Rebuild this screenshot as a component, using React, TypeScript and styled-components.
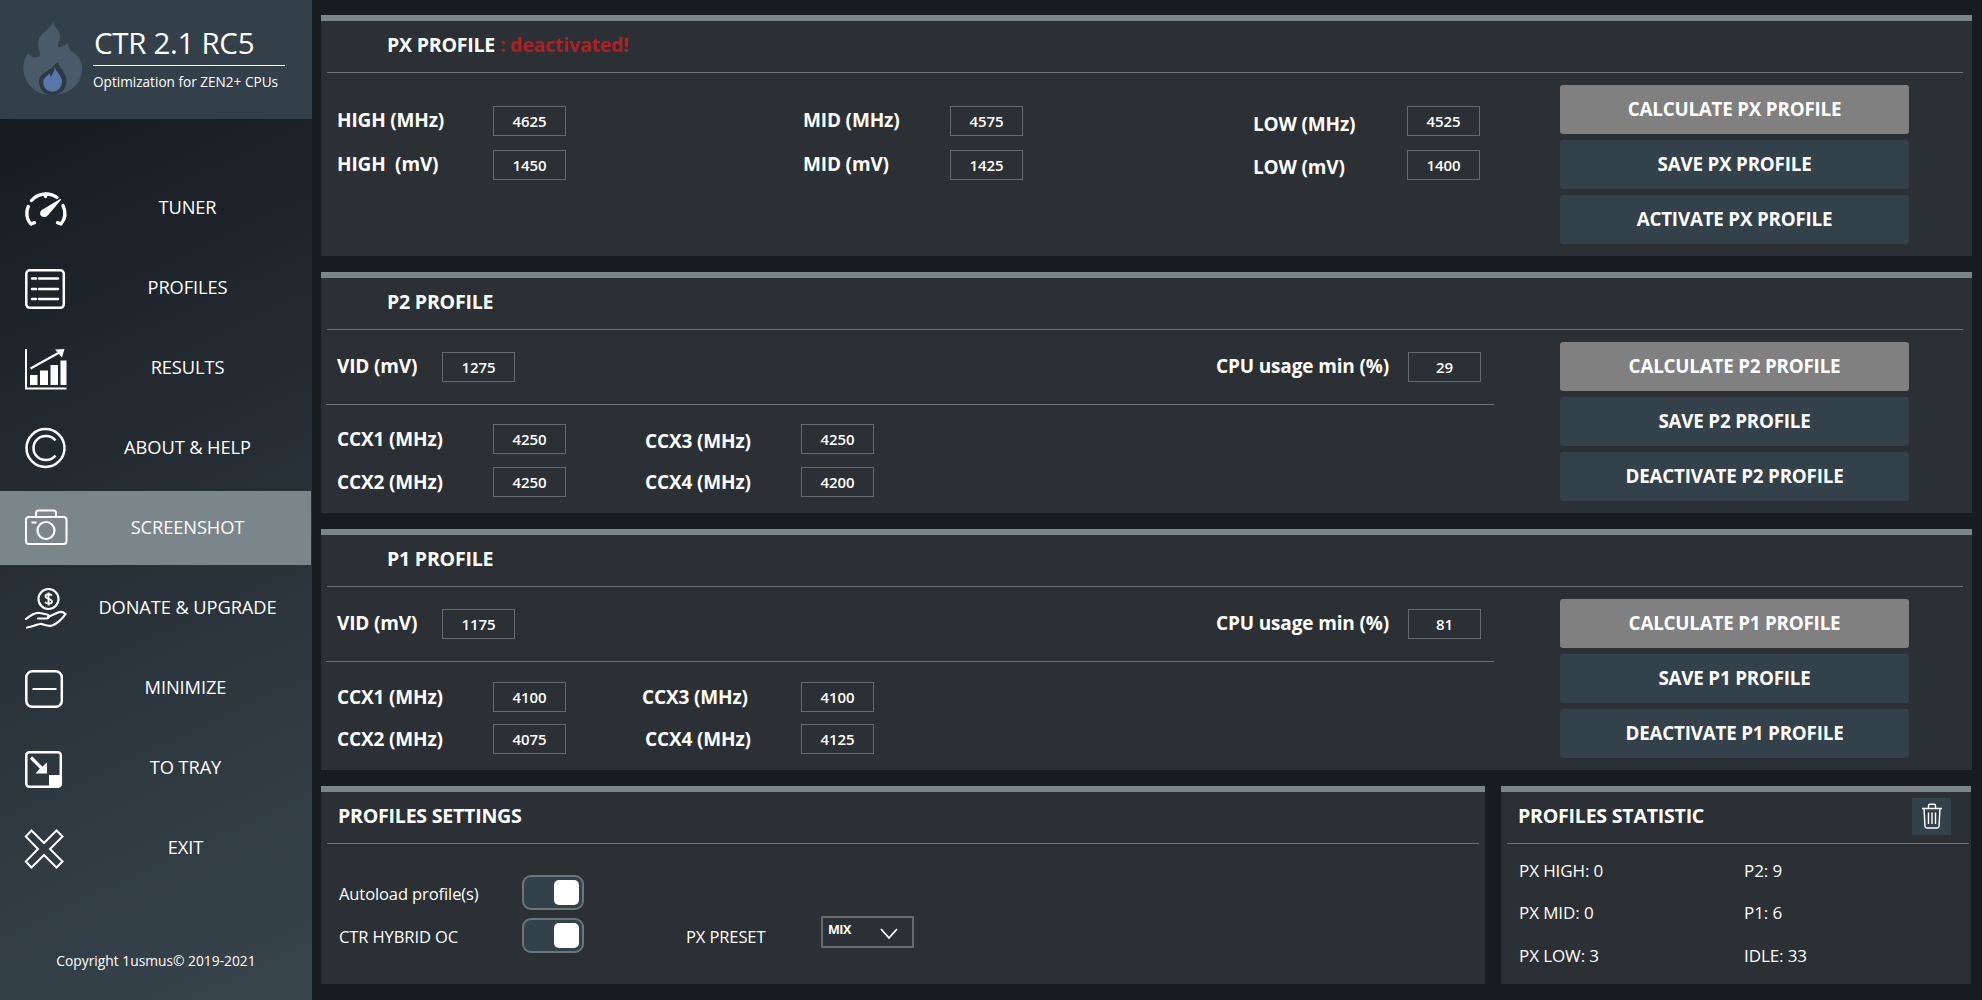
import React from "react";
import styled, { createGlobalStyle } from "styled-components";

const Global = createGlobalStyle`
  html, body { margin: 0; padding: 0; background: #171c20; }
  body { font-family: "Open Sans", "Noto Sans", sans-serif; color: #fff; overflow: hidden; }
  * { box-sizing: border-box; }
`;

const Shell = styled.div`
  display: flex;
  width: 1982px;
  height: 1000px;
  background: #171c20;
`;

const Sidebar = styled.aside`
  width: 312px;
  height: 1000px;
  flex: none;
  display: flex;
  flex-direction: column;
  background: linear-gradient(155deg, #151a1e 8%, #242c32 45%, #38454d 100%);
`;

const Brand = styled.div`
  height: 119px;
  display: flex;
  padding: 21px 0 0 23px;
  background: #33404a;
`;

const BrandText = styled.div`
  margin-left: 11px;
  width: 191px;
`;

const BrandTitle = styled.div`
  font-size: 29.5px;
  line-height: 44px;
  height: 45px;
  border-bottom: 1px solid #fff;
  white-space: nowrap;
  letter-spacing: -0.3px;
  margin-left: -1px;
  padding-left: 1px;
`;

const BrandSub = styled.div`
  font-size: 13.6px;
  line-height: 18px;
  margin-top: 7px;
  margin-left: -1px;
  white-space: nowrap;
`;

const Nav = styled.nav`
  display: flex;
  flex-direction: column;
  gap: 6px;
  padding-top: 52px;
`;

const NavItem = styled.div<{ $active?: boolean }>`
  height: 74px;
  width: 311px;
  display: flex;
  align-items: center;
  padding-left: 25px;
  background: ${(p) => (p.$active ? "#7b868a" : "transparent")};
`;

const NavIcon = styled.svg`
  width: 42px;
  height: 42px;
  flex: none;
  fill: none;
  stroke: #fff;
  stroke-width: 2.5;
  overflow: visible;
`;

const NavLabel = styled.div<{ $shift?: number }>`
  flex: 1;
  text-align: center;
  font-size: 18.3px;
  letter-spacing: -0.1px;
  padding-right: ${(p) => p.$shift ?? 0}px;
  padding-bottom: 4px;
  margin-left: -3px;
  white-space: nowrap;
`;

const Copyright = styled.div`
  margin-top: 66px;
  text-align: center;
  font-size: 13.8px;
  line-height: 20px;
`;

const Main = styled.main`
  flex: 1;
  display: flex;
  flex-direction: column;
  gap: 16px;
  padding: 15px 10px 0 9px;
`;

const Panel = styled.section<{ $height: number; $width?: number }>`
  height: ${(p) => p.$height}px;
  ${(p) => (p.$width ? `width: ${p.$width}px;` : "")}
  flex: none;
  background: #2b3034;
  border-top: 6px solid #7b868a;
`;

const PanelHead = styled.header<{ $left?: number; $right?: number }>`
  height: 52px;
  margin: 0 ${(p) => p.$right ?? 9}px 0 6px;
  padding-left: ${(p) => p.$left ?? 60}px;
  border-bottom: 1px solid #6c7174;
  display: flex;
  align-items: center;
  justify-content: space-between;
`;

const PanelTitle = styled.h2`
  margin: 0 0 5px;
  font-size: 19.6px;
  font-weight: 700;
  letter-spacing: -0.25px;
  white-space: nowrap;
`;

const Warn = styled.span`
  color: #b01f22;
`;

const ProfileBody = styled.div`
  display: flex;
`;

const Fields = styled.div`
  width: 1239px;
  flex: none;
`;

const PxGrid = styled.div`
  display: grid;
  grid-template-columns: 156px 73px 237px 147px 73px 230px 154px 73px;
  grid-auto-rows: 30px;
  row-gap: 14px;
  padding: 33px 0 0 16px;
  align-items: center;
`;

const FieldLabel = styled.div<{ $nudge?: number; $pull?: number }>`
  font-size: 19px;
  font-weight: 700;
  letter-spacing: -0.15px;
  white-space: pre;
  line-height: 26px;
  padding-top: ${(p) => (p.$nudge ?? 0) * 2}px;
  margin: -2px 0 0 ${(p) => -(p.$pull ?? 0)}px;
`;

const ValueBox = styled.div`
  width: 73px;
  height: 30px;
  border: 1px solid #666a6d;
  font-size: 15px;
  font-weight: 600;
  line-height: 28px;
  text-align: center;
  letter-spacing: -0.1px;
`;

const Spacer = styled.div``;

const VidRow = styled.div`
  height: 75px;
  padding: 22px 0 0 11px;
  margin-left: 5px;
  width: 1168px;
  border-bottom: 1px solid #6c7174;
  display: grid;
  grid-template-columns: 105px 73px 701px 192px 73px;
  grid-auto-rows: 30px;
  align-items: center;
`;

const CcxGrid = styled.div<{ $top: number; $gap: number }>`
  display: grid;
  grid-template-columns: 156px 73px 79px 156px 73px;
  grid-auto-rows: 30px;
  row-gap: ${(p) => p.$gap}px;
  padding: ${(p) => p.$top}px 0 0 16px;
  align-items: center;
`;

const Actions = styled.div`
  width: 349px;
  flex: none;
  display: flex;
  flex-direction: column;
  gap: 6px;
  padding-top: 12px;
`;

const ActionButton = styled.button<{ $primary?: boolean }>`
  height: 49px;
  border: 0;
  border-radius: 3px;
  color: #fff;
  background: ${(p) => (p.$primary ? "#808080" : "#33414a")};
  font-family: inherit;
  font-size: 18.8px;
  font-weight: 700;
  letter-spacing: -0.2px;
  padding: 0 0 1px;
`;

const BottomRow = styled.div`
  display: flex;
  gap: 16px;
`;

const SettingsBody = styled.div`
  display: grid;
  grid-template-columns: 183px 62px 102px 135px 93px;
  grid-auto-rows: 35px;
  row-gap: 8px;
  padding: 31px 0 0 18px;
  align-items: center;
`;

const PlainLabel = styled.div`
  font-size: 16.5px;
  letter-spacing: -0.1px;
  white-space: nowrap;
  padding-top: 2px;
`;

const Toggle = styled.div`
  width: 62px;
  height: 35px;
  border: 2px solid #6b767b;
  border-radius: 9px;
  background: #33424a;
  display: flex;
  align-items: center;
  justify-content: flex-end;
  padding-right: 3px;
`;

const Thumb = styled.div`
  width: 25px;
  height: 25px;
  background: #fff;
  border-radius: 5px;
`;

const PresetSelect = styled.div`
  width: 93px;
  height: 32px;
  align-self: start;
  margin-top: -2px;
  border: 2px solid #666a6d;
  display: flex;
  align-items: flex-start;
  justify-content: space-between;
  padding: 3px 13px 0 5px;
  font-size: 12.5px;
  font-weight: 700;
  letter-spacing: -0.5px;
`;

const Chevron = styled.svg`
  width: 20px;
  height: 14px;
  margin-top: 6px;
  fill: none;
  stroke: #fff;
  stroke-width: 1.8;
`;

const TrashButton = styled.button`
  width: 39px;
  height: 37px;
  border: 0;
  padding: 0;
  margin: 0 18px 3px 0;
  background: #33414a;
  display: flex;
  align-items: center;
  justify-content: center;
`;

const TrashIcon = styled.svg`
  width: 22px;
  height: 26px;
  fill: none;
  stroke: #fff;
  stroke-width: 1.4;
`;

const StatGrid = styled.div`
  display: grid;
  grid-template-columns: 225px 1fr;
  grid-auto-rows: 42.5px;
  padding: 5px 0 0 18px;
  align-items: center;
`;

const Stat = styled.div`
  font-size: 17px;
  letter-spacing: -0.1px;
`;

const LogoSvg = styled.svg`
  flex: none;
  width: 60px;
  height: 75px;
`;

const Logo = () => (
  <LogoSvg viewBox="0 0 60 75">
    <path
      d="M30 .7C31 6 36 9 37 14c1 5-3 8-2 12 3 1 7-2 10-3.700 0 4 1 6 5 9 6 4 9 10 9 16 0 16-13 26.700-29 26.700C14 75 .3 63 .3 46c0-5 2-10 5-13.700 2 4 7 5 11 3.400C19 32 14 27 15.300 20 16.500 12 27 9 30 .7Z"
      fill="#4a5a69"
    />
    <path d="M35.300 40.700C35 46 43.500 51 43.500 60c0 8.500-6.500 14-14.500 14S16 68 16 60c0-7 7-8 9.500-11.500C28.500 48 32 43 35.300 40.700Z" fill="#2d3a44" />
    <path d="M32 45.700c0 5 7 8 7 15 0 5.500-4.500 10-9.500 10s-9.300-4-9.300-9.500c0-4.500 3.800-5.700 6-8.700 1 1.500 1.300 2.500 1.500 3.500 2-3 3.800-6.500 4.300-10.300Z" fill="#5578a8" />
  </LogoSvg>
);

const icons: Record<string, React.ReactNode> = {
  tuner: (
    <g strokeLinecap="round" strokeWidth="3.400">
      <path d="M6 37C2.500 33.500 1.500 28.500 2 24c.2-1.500.6-3 1.300-4.500M6.500 13.500C10 9.500 15 7 21 7c4.500 0 8 1.300 11 3.500M38 18.500c2.500 5.500 3 12.500-2 18.500M6 37l3.500-1.300M36 37l-3.500-1.300" />
      <path d="M20.500 7v2.500" />
      <path d="M35.500 12.500L17 23.500c-2.500 2.500-1.500 6 2.500 6 1.500 0 2.500-.8 3.300-2L35.500 12.500Z" fill="#fff" strokeWidth="1.200" strokeLinejoin="round" />
    </g>
  ),
  profiles: (
    <g transform="translate(0 1)">
      <rect x="1.300" y="2.300" width="37.500" height="37.500" rx="3.500" />
      <path d="M7 10.500h4M14 10.500h19M7 21h4M14 21h19M7 31h4M14 31h19" strokeLinecap="round" />
    </g>
  ),
  results: (
    <g transform="translate(0 1)">
      <path d="M1 1v39.500h40.500" strokeWidth="2" />
      <path d="M5.500 20.500L37 3" strokeWidth="2.200" />
      <path d="M30 1.500l9.500-.5-2.500 8.500Z" fill="#fff" stroke="none" />
      <path d="M5 27h7.500v10H5zM15 22.500h8V37h-8zM25.500 17h7.500v20h-7.500zM35.500 12.500h6V37h-6z" fill="#fff" stroke="none" />
    </g>
  ),
  about: (
    <g>
      <circle cx="20.500" cy="21" r="19" />
      <path d="M30.500 13.500C28 10.300 24.500 9 21 9 13.500 9 8.500 14.500 8.500 21S13.500 33 21 33c3.500 0 7-1.300 9.500-4.500" />
    </g>
  ),
  screenshot: (
    <g strokeWidth="2">
      <rect x="1" y="10" width="40.500" height="27" rx="3" />
      <path d="M11 10V6c0-1.500 1-2.500 2.500-2.500h15C30 3.500 31 4.500 31 6v4" />
      <circle cx="21" cy="23.500" r="8.500" strokeWidth="2.200" />
      <path d="M6.500 15.500h5" />
    </g>
  ),
  donate: (
    <g strokeWidth="2.200" transform="translate(0 1)">
      <circle cx="23.500" cy="11" r="10" />
      <path d="M27 7.500c-1-1.500-6-2-6.500.5-.5 3.500 6.500 2 6.500 5.500 0 2.500-5 3-7 .5M23.500 4.500v13" strokeWidth="1.800" />
      <path d="M1 31c6-5 10-7 14-6l7 1.500c3 .5 2.500 4-.5 4H13" strokeLinecap="round" />
      <path d="M23 29l10-4.500c4-1.500 7 1 7.500 1.500-3 5-9 10-13.500 11.500-5 1.500-9-2-12-1.500-4 .5-7 2.500-13 3.500" strokeLinecap="round" />
    </g>
  ),
  minimize: (
    <g transform="translate(0 2)">
      <rect x="1.300" y="2.300" width="35.500" height="35.500" rx="6" />
      <path d="M7.500 20h24" strokeWidth="2" />
    </g>
  ),
  tray: (
    <g transform="translate(0 3)">
      <rect x="1.300" y="2.300" width="34.500" height="34.500" rx="3" />
      <path d="M24 25h12v9.500c0 1.500-1 2.500-2.500 2.500H24Z" fill="#fff" stroke="none" />
      <path d="M6 7.500l12 12" strokeWidth="3.200" />
      <path d="M22 12.500v11H10.500l4-4.500 3-.5.500-2.500Z" fill="#fff" stroke="none" />
    </g>
  ),
  exit: (
    <path
      transform="translate(0 2)"
      d="M6.500 1.500L19 14 31.500 1.500 37.500 7.500 25 20 37.500 32.500 31.500 38.500 19 26 6.500 38.500 .8 32.500 13 20 .8 7.500Z"
      strokeWidth="2"
      strokeLinejoin="miter"
    />
  ),
};

const navItems = [
  { key: "tuner", label: "TUNER" },
  { key: "profiles", label: "PROFILES" },
  { key: "results", label: "RESULTS" },
  { key: "about", label: "ABOUT & HELP" },
  { key: "screenshot", label: "SCREENSHOT", active: true },
  { key: "donate", label: "DONATE & UPGRADE" },
  { key: "minimize", label: "MINIMIZE", shift: 4 },
  { key: "tray", label: "TO TRAY", shift: 4 },
  { key: "exit", label: "EXIT", shift: 4 },
];

const Buttons = ({ id, last }: { id: string; last: string }) => (
  <Actions>
    <ActionButton $primary>CALCULATE {id} PROFILE</ActionButton>
    <ActionButton>SAVE {id} PROFILE</ActionButton>
    <ActionButton>
      {last} {id} PROFILE
    </ActionButton>
  </Actions>
);

type Core = {
  vid: string;
  cpu: string;
  ccx: [string, string, string, string];
  top: number;
  gap: number;
  ccx3Nudge: number;
  ccx3Pull: number;
};

const CoreProfile = ({ id, vid, cpu, ccx, top, gap, ccx3Nudge, ccx3Pull }: Core & { id: string }) => (
  <Panel $height={241}>
    <PanelHead>
      <PanelTitle>{id} PROFILE</PanelTitle>
    </PanelHead>
    <ProfileBody>
      <Fields>
        <VidRow>
          <FieldLabel>VID (mV)</FieldLabel>
          <ValueBox>{vid}</ValueBox>
          <Spacer />
          <FieldLabel>CPU usage min (%)</FieldLabel>
          <ValueBox>{cpu}</ValueBox>
        </VidRow>
        <CcxGrid $top={top} $gap={gap}>
          <FieldLabel $nudge={1}>CCX1 (MHz)</FieldLabel>
          <ValueBox>{ccx[0]}</ValueBox>
          <Spacer />
          <FieldLabel $nudge={ccx3Nudge} $pull={ccx3Pull}>
            CCX3 (MHz)
          </FieldLabel>
          <ValueBox>{ccx[2]}</ValueBox>
          <FieldLabel $nudge={1}>CCX2 (MHz)</FieldLabel>
          <ValueBox>{ccx[1]}</ValueBox>
          <Spacer />
          <FieldLabel $nudge={1}>CCX4 (MHz)</FieldLabel>
          <ValueBox>{ccx[3]}</ValueBox>
        </CcxGrid>
      </Fields>
      <Buttons id={id} last="DEACTIVATE" />
    </ProfileBody>
  </Panel>
);

export default function App() {
  return (
    <Shell>
      <Global />
      <Sidebar>
        <Brand>
          <Logo />
          <BrandText>
            <BrandTitle>CTR 2.1 RC5</BrandTitle>
            <BrandSub>Optimization for ZEN2+ CPUs</BrandSub>
          </BrandText>
        </Brand>
        <Nav>
          {navItems.map((n) => (
            <NavItem key={n.key} $active={n.active}>
              <NavIcon viewBox="0 0 42 42">{icons[n.key]}</NavIcon>
              <NavLabel $shift={n.shift}>{n.label}</NavLabel>
            </NavItem>
          ))}
        </Nav>
        <Copyright>Copyright 1usmus© 2019-2021</Copyright>
      </Sidebar>
      <Main>
        <Panel $height={241}>
          <PanelHead>
            <PanelTitle>
              PX PROFILE<Warn> : deactivated!</Warn>
            </PanelTitle>
          </PanelHead>
          <ProfileBody>
            <Fields>
              <PxGrid>
                <FieldLabel>HIGH (MHz)</FieldLabel>
                <ValueBox>4625</ValueBox>
                <Spacer />
                <FieldLabel>MID (MHz)</FieldLabel>
                <ValueBox>4575</ValueBox>
                <Spacer />
                <FieldLabel $nudge={4}>LOW (MHz)</FieldLabel>
                <ValueBox>4525</ValueBox>
                <FieldLabel>{"HIGH  (mV)"}</FieldLabel>
                <ValueBox>1450</ValueBox>
                <Spacer />
                <FieldLabel>MID (mV)</FieldLabel>
                <ValueBox>1425</ValueBox>
                <Spacer />
                <FieldLabel $nudge={3}>LOW (mV)</FieldLabel>
                <ValueBox>1400</ValueBox>
              </PxGrid>
            </Fields>
            <Buttons id="PX" last="ACTIVATE" />
          </ProfileBody>
        </Panel>
        <CoreProfile id="P2" vid="1275" cpu="29" ccx={["4250", "4250", "4250", "4200"]} top={19} gap={13} ccx3Nudge={3} ccx3Pull={0} />
        <CoreProfile id="P1" vid="1175" cpu="81" ccx={["4100", "4075", "4100", "4125"]} top={20} gap={12} ccx3Nudge={1} ccx3Pull={3} />
        <BottomRow>
          <Panel $height={198} $width={1164}>
            <PanelHead $left={11} $right={6}>
              <PanelTitle>PROFILES SETTINGS</PanelTitle>
            </PanelHead>
            <SettingsBody>
              <PlainLabel>Autoload profile(s)</PlainLabel>
              <Toggle>
                <Thumb />
              </Toggle>
              <Spacer />
              <Spacer />
              <Spacer />
              <PlainLabel>CTR HYBRID OC</PlainLabel>
              <Toggle>
                <Thumb />
              </Toggle>
              <Spacer />
              <PlainLabel>PX PRESET</PlainLabel>
              <PresetSelect>
                MIX
                <Chevron viewBox="0 0 20 14">
                  <path d="M2 2l8 9 8-9" />
                </Chevron>
              </PresetSelect>
            </SettingsBody>
          </Panel>
          <Panel $height={198} $width={470}>
            <PanelHead $left={11} $right={2}>
              <PanelTitle>PROFILES STATISTIC</PanelTitle>
              <TrashButton aria-label="Clear statistics">
                <TrashIcon viewBox="0 0 22 26">
                  <path d="M1 5.500h20M7.500 5V2.800c0-1 .6-1.600 1.500-1.600h4c1 0 1.500.6 1.500 1.600V5M3 5.500l1 18c.1 1 .8 1.500 1.700 1.500h10.600c.9 0 1.600-.5 1.700-1.500l1-18M7.500 9.500v11.500M11 9.500v11.500M14.500 9.500v11.500" />
                </TrashIcon>
              </TrashButton>
            </PanelHead>
            <StatGrid>
              <Stat>PX HIGH: 0</Stat>
              <Stat>P2: 9</Stat>
              <Stat>PX MID: 0</Stat>
              <Stat>P1: 6</Stat>
              <Stat>PX LOW: 3</Stat>
              <Stat>IDLE: 33</Stat>
            </StatGrid>
          </Panel>
        </BottomRow>
      </Main>
    </Shell>
  );
}
